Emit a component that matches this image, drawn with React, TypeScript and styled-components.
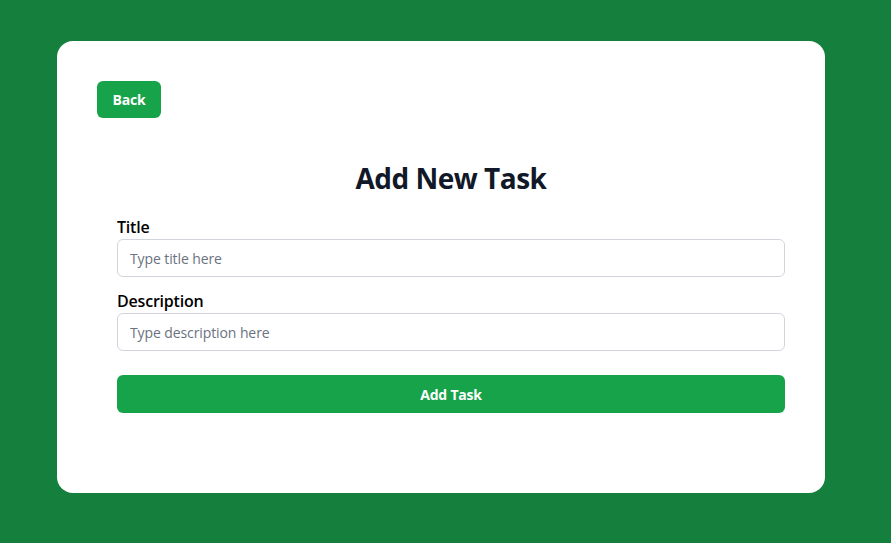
import React from "react";
import styled, { createGlobalStyle } from "styled-components";

const Global = createGlobalStyle`
  html, body { margin: 0; padding: 0; }
  body {
    background: #15803d;
    font-family: "Open Sans", "Noto Sans", sans-serif;
  }
  * { box-sizing: border-box; }
`;

const Page = styled.div`
  min-height: 543px;
  padding: 41px 0 0 57px;
  display: flex;
  justify-content: flex-start;
  align-items: flex-start;
`;

const Card = styled.div`
  width: 768px;
  height: 452px;
  background: #ffffff;
  border-radius: 16px;
  padding: 40px;
  display: flex;
  flex-direction: column;
  align-items: flex-start;
`;

const BackButton = styled.button`
  height: 37px;
  width: 64px;
  border: none;
  border-radius: 6px;
  background: #16a34a;
  color: #ffffff;
  font-family: inherit;
  font-size: 14px;
  font-weight: 700;
  letter-spacing: -0.2px;
  cursor: pointer;
  padding: 0;
`;

const Form = styled.form`
  align-self: stretch;
  margin-left: 20px;
  margin-top: 42px;
  display: flex;
  flex-direction: column;
`;

const Heading = styled.h1`
  margin: 0 0 20px;
  text-align: center;
  font-size: 28px;
  line-height: 36px;
  font-weight: 700;
  letter-spacing: -0.5px;
  color: #111827;
`;

const Field = styled.div<{ $gap: number }>`
  display: flex;
  flex-direction: column;
  margin-bottom: ${(p) => p.$gap}px;
`;

const Label = styled.label`
  font-size: 16px;
  line-height: 23px;
  font-weight: 600;
  letter-spacing: -0.2px;
  color: #000000;
`;

const Input = styled.input`
  height: 38px;
  border: 1px solid #d1d5db;
  border-radius: 6px;
  padding: 0 12px;
  font-family: inherit;
  font-size: 14px;
  letter-spacing: -0.1px;
  color: #111827;
  outline: none;
  &::placeholder { color: #6b7280; }
`;

const Submit = styled.button`
  height: 38px;
  border: none;
  border-radius: 6px;
  background: #16a34a;
  color: #ffffff;
  font-family: inherit;
  font-size: 14px;
  font-weight: 700;
  letter-spacing: -0.2px;
  cursor: pointer;
`;

export default function App() {
  return (
    <>
      <Global />
      <Page>
        <Card>
          <BackButton type="button">Back</BackButton>
          <Form onSubmit={(e) => e.preventDefault()}>
            <Heading>Add New Task</Heading>
            <Field $gap={13}>
              <Label htmlFor="title">Title</Label>
              <Input id="title" placeholder="Type title here" />
            </Field>
            <Field $gap={24}>
              <Label htmlFor="desc">Description</Label>
              <Input id="desc" placeholder="Type description here" />
            </Field>
            <Submit type="submit">Add Task</Submit>
          </Form>
        </Card>
      </Page>
    </>
  );
}
